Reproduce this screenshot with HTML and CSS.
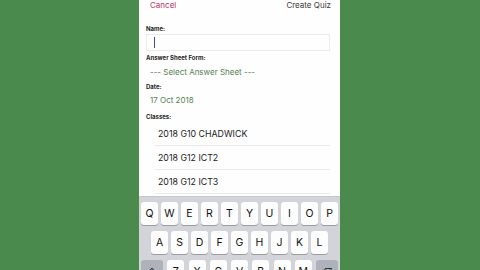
FILE: index.html
```html
<!DOCTYPE html>
<html>
<head>
<meta charset="utf-8">
<link rel="stylesheet" href="styles.css">
</head>
<body>
<div class="stage">
  <div class="phone">
    <div class="form">
      <div class="nav">
        <span class="cancel">Cancel</span>
        <span class="create">Create Quiz</span>
      </div>
      <div class="label l-name">Name:</div>
      <div class="input"><span class="cursor"></span></div>
      <div class="label l-sheet">Answer Sheet Form:</div>
      <div class="value v-sheet">--- Select Answer Sheet ---</div>
      <div class="label l-date">Date:</div>
      <div class="value v-date">17 Oct 2018</div>
      <div class="label l-classes">Classes:</div>
      <div class="rows">
        <div class="row">2018 G10 CHADWICK</div>
        <div class="row">2018 G12 ICT2</div>
        <div class="row">2018 G12 ICT3</div>
      </div>
    </div>
    <div class="keyboard">
      <div class="krow">
        <span class="key">Q</span><span class="key">W</span><span class="key">E</span><span class="key">R</span><span class="key">T</span><span class="key">Y</span><span class="key">U</span><span class="key">I</span><span class="key">O</span><span class="key">P</span>
      </div>
      <div class="krow r2">
        <span class="key">A</span><span class="key">S</span><span class="key">D</span><span class="key">F</span><span class="key">G</span><span class="key">H</span><span class="key">J</span><span class="key">K</span><span class="key">L</span>
      </div>
      <div class="krow r3">
        <span class="key special">&#8679;</span>
        <span class="key">Z</span><span class="key">X</span><span class="key">C</span><span class="key">V</span><span class="key">B</span><span class="key">N</span><span class="key">M</span>
        <span class="key special">&#9003;</span>
      </div>
    </div>
  </div>
</div>
</body>
</html>
```

FILE: styles.css
```css
html, body {
  margin: 0;
  padding: 0;
}
body {
  width: 480px;
  height: 270px;
  overflow: hidden;
  background: #4b8a4d;
  font-family: Inter, "Liberation Sans", Arial, sans-serif;
}
.stage {
  display: flex;
  justify-content: flex-start;
  padding-left: 139px;
  height: 270px;
}
.phone {
  width: 201px;
  height: 270px;
  background: #fefefe;
  display: flex;
  flex-direction: column;
  overflow: hidden;
}
.form {
  height: 196px;
  flex-shrink: 0;
  display: block;
}
.nav {
  height: 11px;
  line-height: 11px;
  display: flex;
  justify-content: space-between;
  padding: 0 9px 0 11px;
  font-size: 8px;
}
.cancel {
  color: #b0375a;
}
.create {
  color: #3a3a3a;
}
.label {
  height: 10px;
  line-height: 10px;
  font-size: 6px;
  font-weight: 700;
  color: #1e1e1e;
  padding-left: 7px;
}
.l-name { margin-top: 13px; }
.l-sheet { margin-top: 2px; }
.l-date { margin-top: 4px; }
.l-classes { margin-top: 6px; }
.input {
  height: 15px;
  margin: 0 10px 0 7px;
  border: 1px solid #ececec;
  display: flex;
  align-items: center;
  padding-left: 7px;
}
.cursor {
  width: 1px;
  height: 11px;
  background: #3b4f86;
}
.value {
  height: 12px;
  line-height: 12px;
  font-size: 8px;
  color: #557f55;
  padding-left: 11px;
}
.v-sheet { margin-top: 3px; }
.v-date { margin-top: 2px; }
.rows {
  margin: 0 10px 0 16px;
}
.row {
  height: 23px;
  line-height: 23px;
  border-bottom: 1px solid #e9e9e9;
  font-size: 8.8px;
  color: #1a1a1a;
  padding-left: 3px;
}
.keyboard {
  flex: 1;
  min-height: 0;
  overflow: hidden;
  background: #d2d4da;
  border-top: 1px solid #c6c8cd;
  padding: 5px 2px 0 2px;
  display: flex;
  flex-direction: column;
  gap: 6px;
}
.krow {
  display: flex;
  flex-shrink: 0;
  gap: 3px;
  justify-content: center;
}
.key {
  width: 17px;
  height: 23px;
  flex-shrink: 0;
  background: #fdfdfd;
  border-radius: 3px;
  box-shadow: 0 1px 0 #9a9ca2;
  display: flex;
  align-items: center;
  justify-content: center;
  font-size: 10.5px;
  color: #111;
}
.r3 {
  justify-content: space-between;
}
.r3 .special {
  width: 22px;
  background: #adb2bb;
  font-size: 9px;
}
```
